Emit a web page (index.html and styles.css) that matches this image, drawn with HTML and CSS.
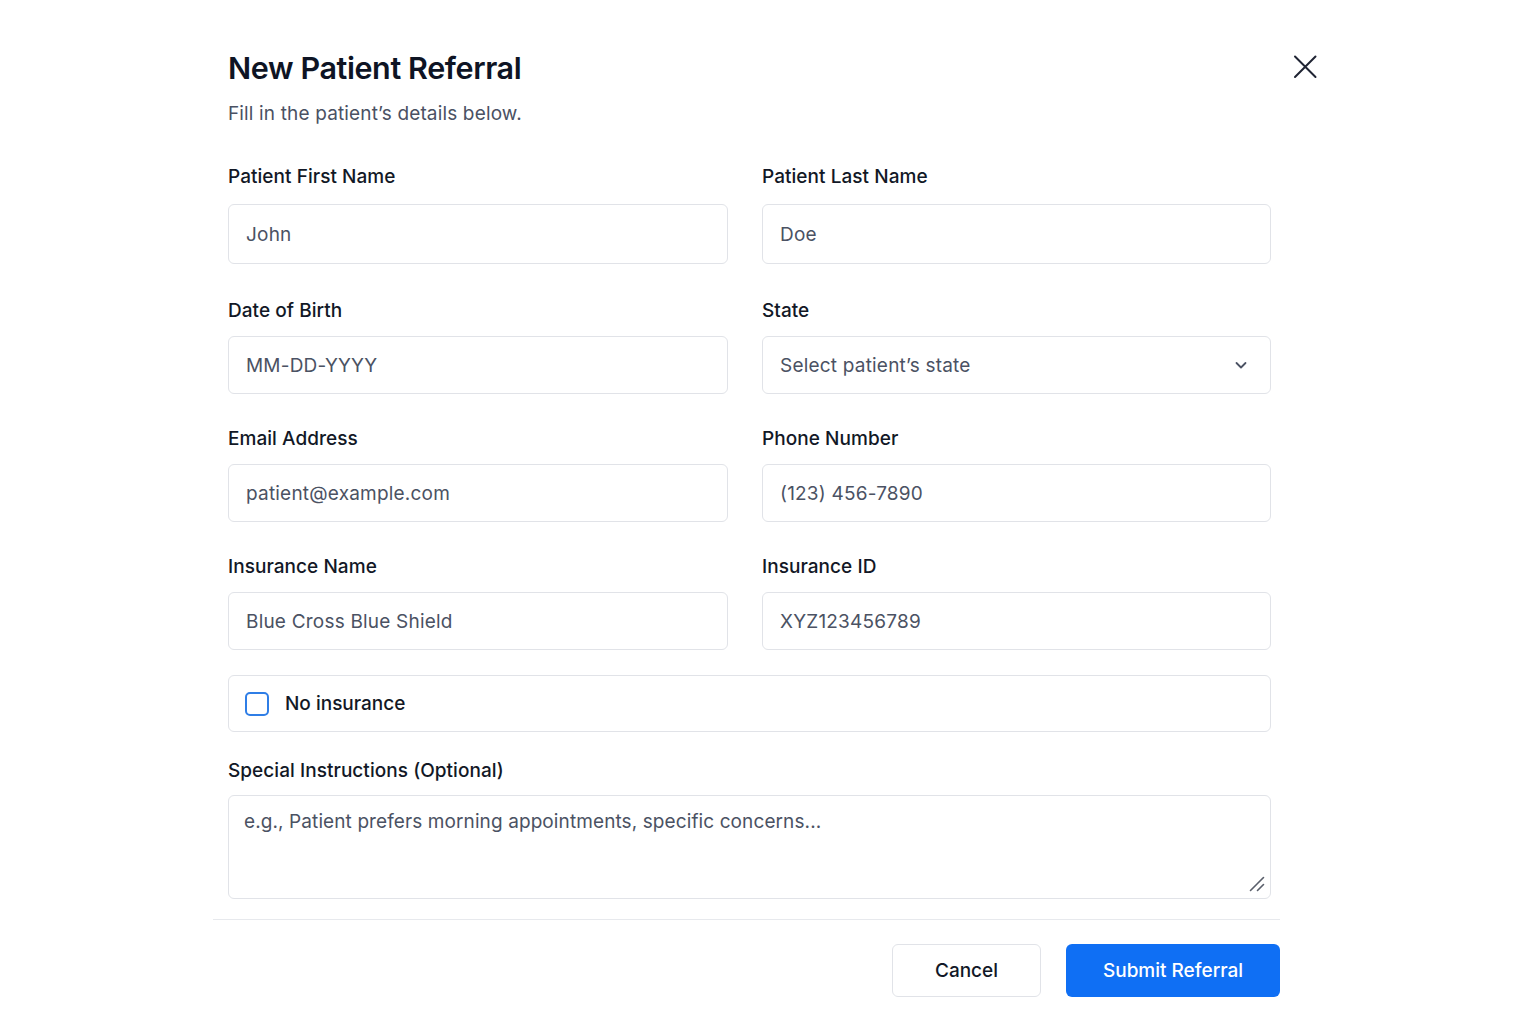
FILE: index.html
```html
<!DOCTYPE html>
<html lang="en">
<head>
    <meta charset="UTF-8">
    <meta name="viewport" content="width=device-width, initial-scale=1.0">
    <title>New Patient Referral</title>
    <link rel="stylesheet" href="styles.css">
</head>
<body>
    <div class="modal">
        <div class="modal-header">
            <div>
                <h1>New Patient Referral</h1>
                <p class="subtitle">Fill in the patient’s details below.</p>
            </div>
            <button class="close-btn" aria-label="Close">
                <svg width="24" height="24" viewBox="0 0 24 24" fill="none" stroke="#1f2433" stroke-width="2" stroke-linecap="round">
                    <path d="M2 1.5L22.5 22M22.5 1.5L2 22"/>
                </svg>
            </button>
        </div>

        <form class="form">
            <div class="grid">
                <div class="field first">
                    <label>Patient First Name</label>
                    <input type="text" placeholder="John">
                </div>
                <div class="field first">
                    <label>Patient Last Name</label>
                    <input type="text" placeholder="Doe">
                </div>
                <div class="field">
                    <label>Date of Birth</label>
                    <input type="text" placeholder="MM-DD-YYYY">
                </div>
                <div class="field">
                    <label>State</label>
                    <div class="select-box">
                        <span>Select patient’s state</span>
                        <svg width="16" height="16" viewBox="0 0 16 16" fill="none" stroke="#4b5263" stroke-width="1.8" stroke-linecap="round" stroke-linejoin="round">
                            <path d="M3.5 6l4.5 4.5L12.5 6"/>
                        </svg>
                    </div>
                </div>
                <div class="field">
                    <label>Email Address</label>
                    <input type="text" placeholder="patient@example.com">
                </div>
                <div class="field">
                    <label>Phone Number</label>
                    <input type="text" placeholder="(123) 456-7890">
                </div>
                <div class="field">
                    <label>Insurance Name</label>
                    <input type="text" placeholder="Blue Cross Blue Shield">
                </div>
                <div class="field">
                    <label>Insurance ID</label>
                    <input type="text" placeholder="XYZ123456789">
                </div>
            </div>

            <label class="check-row">
                <span class="checkbox"></span>
                <span>No insurance</span>
            </label>

            <div class="field notes">
                <label>Special Instructions (Optional)</label>
                <div class="textarea-wrap">
                    <textarea placeholder="e.g., Patient prefers morning appointments, specific concerns..."></textarea>
                    <svg class="grip" width="16" height="16" viewBox="0 0 16 16" fill="none" stroke="#5a5f6b" stroke-width="1.6" stroke-linecap="round">
                        <path d="M1.5 14.5L14.5 1.5M8.5 14.5L14.5 8.5"/>
                    </svg>
                </div>
            </div>
        </form>

        <div class="modal-footer">
            <button class="btn btn-cancel" type="button">Cancel</button>
            <button class="btn btn-submit" type="button">Submit Referral</button>
        </div>
    </div>
</body>
</html>
```

FILE: styles.css
```css
body {
    margin: 0;
    padding: 0;
    background: #fff;
    font-family: Inter, "Noto Sans", sans-serif;
    color: #111827;
}
.modal {
    width: 1067px;
    margin-left: 213px;
    padding-top: 50px;
}
.modal-header {
    display: flex;
    justify-content: space-between;
    align-items: flex-start;
    padding-left: 15px;
    margin-right: -37px;
}
h1 {
    margin: 0;
    font-size: 30.5px;
    line-height: 36px;
    font-weight: 600;
    color: #0e1424;
    letter-spacing: -0.4px;
}
.subtitle {
    margin: 16px 0 0;
    font-size: 19px;
    line-height: 24px;
    color: #4a5163;
    letter-spacing: 0.15px;
}
.close-btn {
    background: none;
    border: none;
    padding: 0;
    margin-top: 5px;
    cursor: pointer;
}
.form {
    padding: 39px 9px 0 15px;
}
.grid {
    display: grid;
    grid-template-columns: 500px 509px;
    column-gap: 34px;
    row-gap: 33px;
}
.field {
    display: flex;
    flex-direction: column;
    gap: 13px;
}
.field.first {
    gap: 15px;
    margin-bottom: 2px;
}
.field label {
    font-size: 19px;
    line-height: 24px;
    font-weight: 500;
    color: #121826;
    letter-spacing: 0.05px;
}
input, .select-box {
    box-sizing: border-box;
    height: 58px;
    padding: 0 17px;
    border: 1px solid #e1e3e8;
    border-radius: 6px;
    background: #fff;
    font-family: inherit;
    font-size: 19px;
    letter-spacing: 0.2px;
    color: #111827;
    outline: none;
}
.field.first input {
    height: 60px;
}
input::placeholder, textarea::placeholder {
    color: #4b5263;
}
.select-box {
    display: flex;
    align-items: center;
    justify-content: space-between;
    color: #4b5263;
    padding-right: 21px;
}
.check-row {
    box-sizing: border-box;
    display: flex;
    align-items: center;
    gap: 16px;
    height: 57px;
    margin-top: 25px;
    padding: 0 16px;
    border: 1px solid #e1e3e8;
    border-radius: 6px;
    font-size: 19px;
    font-weight: 500;
    color: #121826;
}
.checkbox {
    box-sizing: border-box;
    width: 24px;
    height: 24px;
    border: 2px solid #2f7ee6;
    border-radius: 5px;
}
.notes {
    margin-top: 27px;
    gap: 12px;
}
.textarea-wrap {
    position: relative;
    display: flex;
}
textarea {
    box-sizing: border-box;
    width: 100%;
    height: 104px;
    padding: 13px 15px;
    border: 1px solid #e1e3e8;
    border-radius: 6px;
    font-family: inherit;
    font-size: 19px;
    line-height: 26px;
    letter-spacing: 0.1px;
    color: #111827;
    outline: none;
    resize: none;
}
.grip {
    position: absolute;
    right: 6px;
    bottom: 7px;
}
.modal-footer {
    display: flex;
    justify-content: flex-end;
    gap: 25px;
    margin-top: 20px;
    padding-top: 24px;
    border-top: 1px solid #e7e9ed;
}
.btn {
    height: 53px;
    border-radius: 6px;
    font-family: inherit;
    font-size: 19px;
    font-weight: 500;
    cursor: pointer;
}
.btn-cancel {
    width: 149px;
    border: 1px solid #e1e3e8;
    background: #fff;
    color: #111827;
}
.btn-submit {
    width: 214px;
    border: none;
    background: #0f6ff4;
    color: #fff;
}
```
